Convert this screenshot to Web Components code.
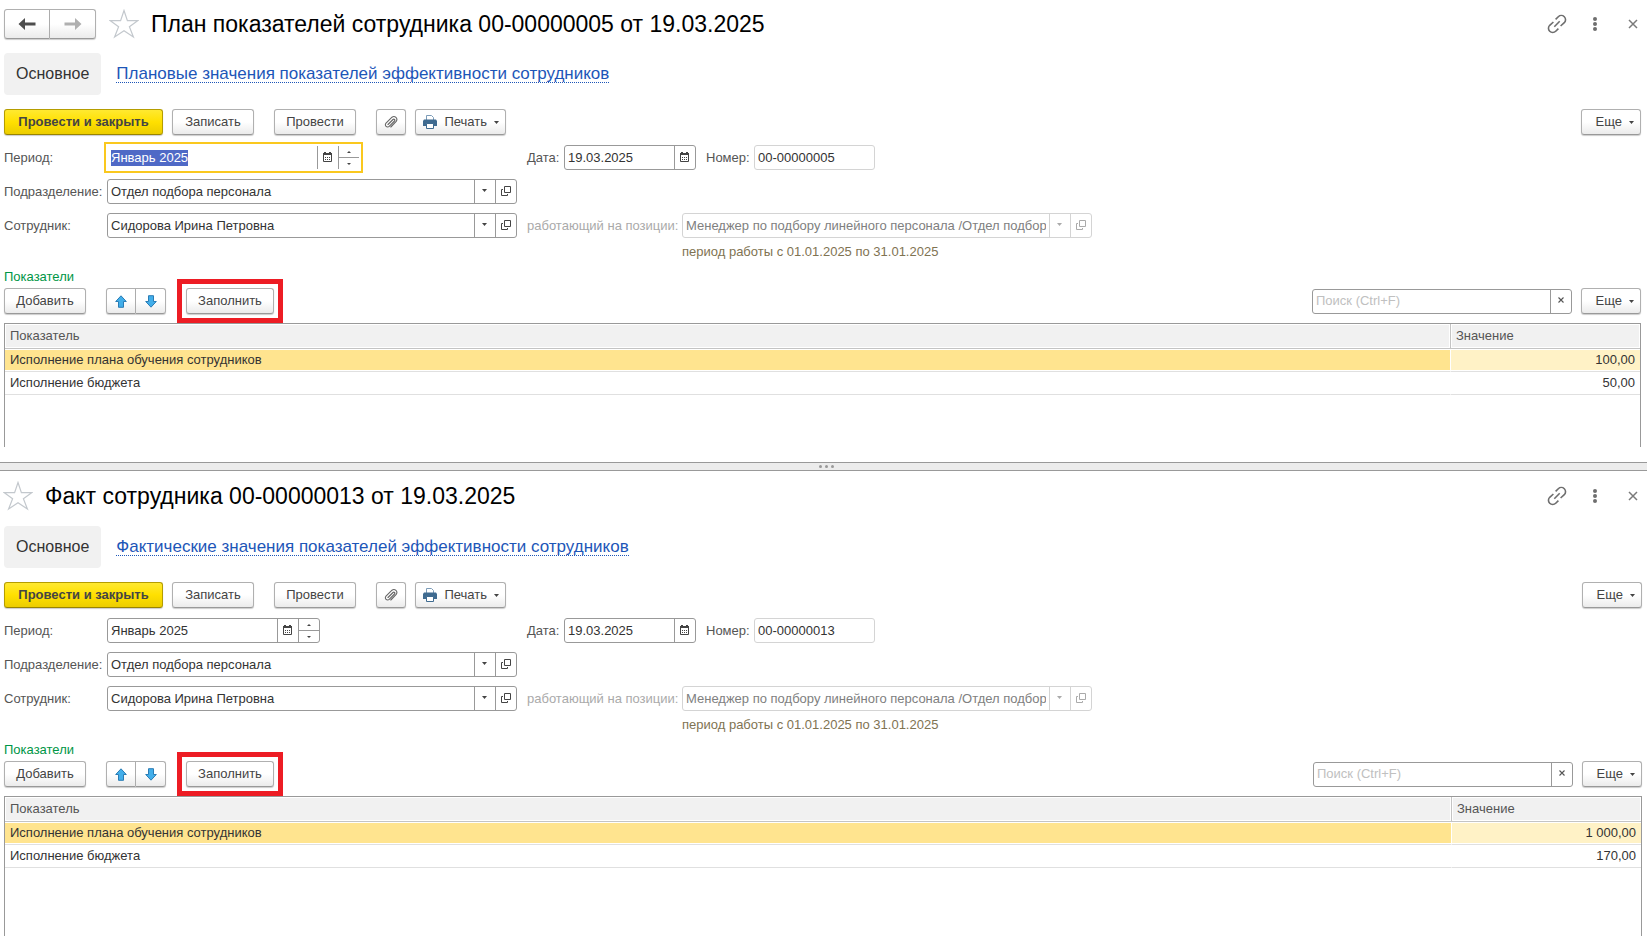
<!DOCTYPE html>
<html lang="ru">
<head>
<meta charset="utf-8">
<title>План и факт показателей сотрудника</title>
<style>
    body{
        margin: 0;
        background-color: #fff;
        color: #333;
        font-family: "Liberation Sans", Arial, sans-serif;
        font-size: 13px;
        line-height: 16px;
    }
</style>
</head>
<body>

<work-space>
    <doc-form
        nav focused
        heading="План показателей сотрудника 00-00000005 от 19.03.2025"
        link="Плановые значения показателей эффективности сотрудников"
        number="00-00000005">
        <indicator-table slot="table" rows='[["Исполнение плана обучения сотрудников","100,00"],["Исполнение бюджета","50,00"]]'></indicator-table>
    </doc-form>
    <doc-form
        slot="second"
        heading="Факт сотрудника 00-00000013 от 19.03.2025"
        link="Фактические значения показателей эффективности сотрудников"
        number="00-00000013">
        <indicator-table slot="table" rows='[["Исполнение плана обучения сотрудников","1 000,00"],["Исполнение бюджета","170,00"]]'></indicator-table>
    </doc-form>
</work-space>

<script>
const icons = {
    back: '<svg width="18" height="14" viewBox="0 0 18 14"><path d="M0.5 7 L7 1 V5.5 H17.5 V8.5 H7 V13 Z" fill="#4d4d4d"/></svg>',
    forward: '<svg width="18" height="14" viewBox="0 0 18 14"><path d="M17.5 7 L11 1 V5.5 H0.5 V8.5 H11 V13 Z" fill="#b0b0b0"/></svg>',
    star: '<svg width="30" height="30" viewBox="0 0 30 30"><path d="M15 1.5 L18.4 11.6 H29 L20.4 17.8 L24.4 28 L15 21.8 L5.6 28 L9.6 17.8 L1 11.6 H11.6 Z" fill="none" stroke="#c3c8cd" stroke-width="1.2"/></svg>',
    link: '<svg width="20" height="20" viewBox="0 0 20 20" fill="none" stroke="#6e6e6e" stroke-width="1.6"><path d="M8.6 5.4 L11.3 2.7 A4.2 4.2 0 0 1 17.3 8.7 L13.6 12 M11.4 14.6 L8.7 17.3 A4.2 4.2 0 0 1 2.7 11.3 L6.4 8 M7.3 12.7 L12.7 7.3"/></svg>',
    dots: '<svg width="6" height="16" viewBox="0 0 6 16" fill="#6e6e6e"><circle cx="3" cy="3" r="2"/><circle cx="3" cy="8" r="2"/><circle cx="3" cy="13" r="2"/></svg>',
    close: '<svg width="10" height="10" viewBox="0 0 10 10"><path d="M1 1 L9 9 M9 1 L1 9" stroke="#7a7a7a" stroke-width="1.5"/></svg>',
    clip: '<svg width="14" height="14" viewBox="0 0 14 14"><path d="M4 9.5 L9 4.5 A1 1 0 0 1 10.5 6 L5.2 11.3 A2.2 2.2 0 0 1 2 8.2 L8 2.2 A3 3 0 0 1 12.2 6.4 L6.8 12" fill="none" stroke="#666" stroke-width="1.1" stroke-linecap="round"/></svg>',
    print: '<svg width="14" height="14" viewBox="0 0 14 14"><path d="M3.5 5 V0.5 H8.5 L10.5 2.5 V5" fill="#fff" stroke="#7c9cb8"/><path d="M1 4.5 H13 L14 6 V11 H0 V6 Z" fill="#3f6b90"/><path d="M3.5 8.5 H10.5 V13.5 H3.5 Z" fill="#fff" stroke="#3f6b90"/></svg>',
    up: '<svg width="12" height="13" viewBox="0 0 12 13"><path d="M6 0.8 L11.3 6.5 H8.5 V12.3 H3.5 V6.5 H0.7 Z" fill="#42aeea" stroke="#2a7cb4"/></svg>',
    down: '<svg width="12" height="13" viewBox="0 0 12 13"><path d="M6 12.2 L11.3 6.5 H8.5 V0.7 H3.5 V6.5 H0.7 Z" fill="#42aeea" stroke="#2a7cb4"/></svg>',
    calendar: '<svg width="9" height="10" viewBox="0 0 9 10"><path d="M0.5 3 V9.5 H8.5 V3" fill="none" stroke="currentColor"/><path d="M0 1 H1 V0 H3 V1 H6 V0 H8 V1 H9 V3 H0 Z" fill="currentColor"/><path d="M2 5.5 H7 M2 7.5 H7" stroke="currentColor" stroke-dasharray="1 1"/></svg>',
    caret: '<svg width="5" height="3" viewBox="0 0 5 3"><path d="M0 0 H5 L2.5 3 Z" fill="currentColor"/></svg>',
    spinUp: '<svg width="4" height="2" viewBox="0 0 4 2"><path d="M0 2 L2 0 L4 2 Z" fill="currentColor"/></svg>',
    spinDown: '<svg width="4" height="2" viewBox="0 0 4 2"><path d="M0 0 L2 2 L4 0 Z" fill="currentColor"/></svg>',
    open: '<svg width="10" height="10" viewBox="0 0 10 10" fill="none" stroke="currentColor"><path d="M3.5 0.5 H9.5 V6.5 H3.5 Z M2 3.5 H0.5 V9.5 H6.5 V8"/></svg>',
    clear: '<svg width="6" height="6" viewBox="0 0 6 6"><path d="M0.5 0.5 L5.5 5.5 M5.5 0.5 L0.5 5.5" stroke="#555" stroke-width="1.1"/></svg>'
};

// which small buttons stand at the end of an entry field
const fieldButtons = {
    calendar: `<button aria-label="Календарь">${icons.calendar}</button>`,
    spin: `<span class="spin"><button aria-label="Больше">${icons.spinUp}</button><button aria-label="Меньше">${icons.spinDown}</button></span>`,
    select: `<button aria-label="Выбрать">${icons.caret}</button>`,
    open: `<button aria-label="Открыть">${icons.open}</button>`,
    clear: `<button aria-label="Очистить">${icons.clear}</button>`
};

class PushButton extends HTMLElement {
    constructor() {
        super();
        const icon = this.getAttribute("icon");
        this.attachShadow({mode: 'open'});
        this.shadowRoot.innerHTML = `
            <style>
                :host{
                    display: block;
                    flex: none;
                }

                button{
                    display: flex;
                    align-items: center;
                    justify-content: center;
                    gap: 7px;
                    box-sizing: border-box;
                    width: 100%;
                    height: var(--push-height, 26px);
                    margin: 0;
                    padding: 0 8px;
                    border: solid 1px #b0b0b0;
                    border-bottom-color: #999;
                    border-radius: 3px;
                    background: linear-gradient(#fff 50%, #ebebeb);
                    box-shadow: 0 1px 1px rgba(0,0,0,0.2);
                    color: #444;
                    font: inherit;
                    white-space: nowrap;
                }

                :host([primary]) button{
                    border-color: #b59d00;
                    border-bottom-color: #998400;
                    background: linear-gradient(#ffe931, #ffe000 50%, #eccd00);
                    font-weight: bold;
                }

                :host([icon-only]) button{
                    padding: 0;
                }

                :host([menu]) button{
                    justify-content: flex-end;
                    padding: 0 6px;
                }

                :host([joined="left"]) button{
                    border-radius: 3px 0 0 3px;
                }

                :host([joined="right"]) button{
                    border-left: none;
                    border-radius: 0 3px 3px 0;
                }
            </style>
            <button ${this.hasAttribute("label") ? `aria-label="${this.getAttribute("label")}"` : ""}>${icon ? icons[icon] : ""}<slot></slot>${this.hasAttribute("menu") ? icons.caret : ""}</button>
        `;
    }
}

class EntryField extends HTMLElement {
    constructor() {
        super();
        const label = this.getAttribute("label");
        const buttons = (this.getAttribute("buttons") || "").split(" ").filter(Boolean);
        this.attachShadow({mode: 'open'});
        this.shadowRoot.innerHTML = `
            <style>
                :host{
                    display: flex;
                    align-items: center;
                    color: #555;
                }

                label{
                    flex: none;
                    width: var(--label-width, auto);
                    white-space: nowrap;
                }

                .box{
                    display: flex;
                    flex: none;
                    box-sizing: border-box;
                    width: var(--box-width);
                    height: 25px;
                    border: solid 1px #999;
                    border-radius: 3px;
                    background-color: #fff;
                    color: #444;
                }

                input{
                    flex: 1;
                    min-width: 0;
                    margin: 0;
                    padding: 0 3px;
                    border: none;
                    outline: none;
                    background: none;
                    color: #333;
                    font: inherit;
                }

                input::placeholder{
                    color: #c0c0c0;
                }

                input::selection{
                    background-color: #4f69c6;
                    color: #fff;
                }

                button{
                    display: flex;
                    align-items: center;
                    justify-content: center;
                    box-sizing: border-box;
                    width: 21px;
                    margin: 0;
                    padding: 0 1px 2px 0;
                    border: none;
                    border-left: solid 1px #999;
                    background: none;
                    color: inherit;
                }

                .spin{
                    display: flex;
                    flex-direction: column;
                    border-left: solid 1px #999;
                }

                .spin button{
                    flex: 1;
                    width: 20px;
                    padding: 0;
                    border-left: none;
                }

                .spin button + button{
                    border-top: solid 1px #999;
                }

                :host([readonly]) .box{
                    border-color: #d4d4d4;
                }

                :host([disabled]){
                    color: #aaa;
                }

                :host([disabled]) .box{
                    border-color: #d4d4d4;
                    color: #aaa;
                }

                :host([disabled]) input{
                    color: #808080;
                }

                :host([disabled]) button{
                    border-color: #d4d4d4;
                }

                /* the active field carries a thick yellow frame outside its box */
                :host([active]) .box{
                    border-color: #fff;
                    border-radius: 0;
                    outline: solid 2px #fac81e;
                    outline-offset: 1px;
                }
            </style>
            ${label ? `<label for="field">${label}</label>` : ""}
            <div class="box">
                <input id="field" type="text">
                ${buttons.map(name => fieldButtons[name]).join("")}
            </div>
        `;
        const input = this.shadowRoot.querySelector("input");
        input.value = this.getAttribute("value") || "";
        input.placeholder = this.getAttribute("placeholder") || "";
        input.readOnly = this.hasAttribute("readonly");
        input.disabled = this.hasAttribute("disabled");
        if (!label) input.setAttribute("aria-label", input.placeholder);
    }

    connectedCallback() {
        if (this.hasAttribute("active")) {
            const input = this.shadowRoot.querySelector("input");
            input.focus();
            input.select();
        }
    }
}

class IndicatorTable extends HTMLElement {
    constructor() {
        super();
        const rows = JSON.parse(this.getAttribute("rows"));
        this.attachShadow({mode: 'open'});
        this.shadowRoot.innerHTML = `
            <style>
                :host{
                    display: block;
                    flex: 1;
                    border: solid 1px #999;
                    border-bottom: none;
                }

                table{
                    width: 100%;
                    border-collapse: separate;
                    border-spacing: 0;
                    table-layout: fixed;
                }

                th, td{
                    box-sizing: border-box;
                    height: 23px;
                    padding: 0 5px;
                    border-bottom: solid 1px #e0e0e0;
                    text-align: left;
                    font-weight: normal;
                }

                th{
                    height: 25px;
                    border-bottom-color: #c4c4c4;
                    background-color: #f1f1f1;
                    box-shadow: inset 0 0 0 1px #fff;
                    color: #555;
                }

                th + th{
                    width: 190px;
                    border-left: solid 1px #c4c4c4;
                }

                td + td{
                    border-left: solid 1px #fff;
                    text-align: right;
                }

                tr.current td{
                    background-color: #ffe48f;
                    box-shadow: inset 0 1px #fff, inset 0 -1px #fff;
                }

                tr.current td + td{
                    background-color: #fff2c6;
                }
            </style>
            <table>
                <thead>
                    <tr><th>Показатель</th><th>Значение</th></tr>
                </thead>
                <tbody>
                    ${rows.map(([name, value], i) => `<tr${i === 0 ? ' class="current"' : ""}><td>${name}</td><td>${value}</td></tr>`).join("")}
                </tbody>
            </table>
        `;
    }
}

class DocForm extends HTMLElement {
    constructor() {
        super();
        const focused = this.hasAttribute("focused");
        this.attachShadow({mode: 'open'});
        this.shadowRoot.innerHTML = `
            <style>
                :host{
                    display: flex;
                    flex-direction: column;
                    box-sizing: border-box;
                    padding: 0 5px 0 4px;
                }

                :host([nav]){
                    padding-right: 6px;
                }

                header{
                    display: flex;
                    align-items: center;
                    height: 50px;
                    margin: 0 -5px 0 -1px;
                }

                :host([nav]) header{
                    height: 48px;
                    margin-right: -6px;
                }

                h1{
                    flex: 1;
                    margin: 0;
                    color: #000;
                    font-size: 23px;
                    font-weight: normal;
                    line-height: 28px;
                    white-space: nowrap;
                }

                .history{
                    display: flex;
                    margin: 0 13px 0 1px;
                    --push-height: 30px;
                }

                .history push-button{
                    width: 46px;
                }

                .tools{
                    display: flex;
                    gap: 10px;
                }

                .plain{
                    display: flex;
                    align-items: center;
                    justify-content: center;
                    width: 28px;
                    height: 30px;
                    margin: 0;
                    padding: 0;
                    border: none;
                    background: none;
                }

                .star{
                    width: 30px;
                    margin-right: 12px;
                }

                nav{
                    display: flex;
                    align-items: center;
                    gap: 15px;
                    margin-top: 5px;
                    font-size: 16px;
                    line-height: 18px;
                }

                .tab{
                    padding: 12px;
                    border-radius: 4px;
                    background-color: #f1f1f1;
                }

                a{
                    border-bottom: dotted 1px #1d56b8;
                    color: #1d56b8;
                    font-size: 17px;
                    line-height: 16px;
                    text-decoration: none;
                }

                .bar{
                    display: flex;
                    align-items: center;
                    gap: 9px;
                }

                .commands{
                    margin: 14px 0 10px;
                }

                .wide{
                    margin-left: 11px;
                }

                .right{
                    margin-left: auto;
                }

                .main{
                    width: 159px;
                }

                .command{
                    width: 82px;
                }

                .clip{
                    width: 30px;
                }

                .print{
                    width: 91px;
                }

                .more{
                    width: 60px;
                }

                .fields{
                    display: grid;
                    grid-template-columns: 513px 1fr;
                    column-gap: 10px;
                    row-gap: 9px;
                    --label-width: 103px;
                    --box-width: 410px;
                }

                .period{
                    --box-width: ${focused ? "253px" : "213px"};
                }

                .pair{
                    display: flex;
                    gap: 10px;
                }

                .date{
                    --label-width: 37px;
                    --box-width: 132px;
                }

                .number{
                    --label-width: 48px;
                    --box-width: 121px;
                }

                .position{
                    grid-column: 2;
                    --label-width: 155px;
                }

                .note{
                    margin: 6px 0 0 678px;
                    color: #7f7352;
                }

                h2{
                    margin: 9px 0 3px;
                    color: #009646;
                    font-size: 13px;
                    font-weight: normal;
                    line-height: 16px;
                }

                .list{
                    margin-bottom: 9px;
                }

                .arrows{
                    display: flex;
                    margin: 0 11px;
                }

                .arrows push-button{
                    width: 30px;
                }

                .search{
                    --label-width: auto;
                    --box-width: 260px;
                }

                /* red frame drawn round the command, over whatever is near */
                .marked{
                    width: 88px;
                    outline: solid 5px #ed1c24;
                    outline-offset: 4px;
                }

                ::slotted(indicator-table){
                    flex: 1;
                }
            </style>
            <header>
                ${this.hasAttribute("nav") ? `
                <div class="history">
                    <push-button icon-only joined="left" icon="back" label="Назад"></push-button>
                    <push-button icon-only joined="right" icon="forward" label="Вперед"></push-button>
                </div>` : ""}
                <button class="plain star" aria-label="В избранное">${icons.star}</button>
                <h1>${this.getAttribute("heading")}</h1>
                <div class="tools">
                    <button class="plain" aria-label="Ссылка">${icons.link}</button>
                    <button class="plain" aria-label="Меню">${icons.dots}</button>
                    <button class="plain" aria-label="Закрыть">${icons.close}</button>
                </div>
            </header>
            <nav>
                <span class="tab">Основное</span>
                <a href="#">${this.getAttribute("link")}</a>
            </nav>
            <div class="bar commands">
                <push-button class="main" primary>Провести и закрыть</push-button>
                <push-button class="command">Записать</push-button>
                <push-button class="command wide">Провести</push-button>
                <push-button class="clip wide" icon-only icon="clip" label="Файлы"></push-button>
                <push-button class="print" icon="print" menu>Печать</push-button>
                <push-button class="more right" menu>Еще</push-button>
            </div>
            <div class="fields">
                <entry-field class="period" label="Период:" value="Январь 2025" buttons="calendar spin" ${focused ? "active" : ""}></entry-field>
                <div class="pair">
                    <entry-field class="date" label="Дата:" value="19.03.2025" buttons="calendar"></entry-field>
                    <entry-field class="number" label="Номер:" value="${this.getAttribute("number")}" readonly></entry-field>
                </div>
                <entry-field label="Подразделение:" value="Отдел подбора персонала" buttons="select open"></entry-field>
                <span></span>
                <entry-field label="Сотрудник:" value="Сидорова Ирина Петровна" buttons="select open"></entry-field>
                <entry-field class="position" label="работающий на позиции:" value="Менеджер по подбору линейного персонала /Отдел подбора персонала/" buttons="select open" disabled></entry-field>
            </div>
            <div class="note">период работы с 01.01.2025 по 31.01.2025</div>
            <h2>Показатели</h2>
            <div class="bar list">
                <push-button class="command">Добавить</push-button>
                <div class="arrows">
                    <push-button icon-only joined="left" icon="up" label="Вверх"></push-button>
                    <push-button icon-only joined="right" icon="down" label="Вниз"></push-button>
                </div>
                <push-button class="marked">Заполнить</push-button>
                <entry-field class="search right" placeholder="Поиск (Ctrl+F)" buttons="clear"></entry-field>
                <push-button class="more" menu>Еще</push-button>
            </div>
            <slot name="table"></slot>
        `;
    }
}

class WorkSpace extends HTMLElement {
    constructor() {
        super();
        this.attachShadow({mode: 'open'});
        this.shadowRoot.innerHTML = `
            <style>
                :host{
                    display: grid;
                    grid-template-rows: 447fr auto 465fr;
                    box-sizing: border-box;
                    height: 100vh;
                    padding-bottom: 9px;
                }

                .splitter{
                    display: flex;
                    align-items: center;
                    justify-content: center;
                    gap: 3px;
                    height: 7px;
                    margin-top: 15px;
                    padding-left: 6px;
                    border: solid #999;
                    border-width: 1px 0;
                    background-color: #ececec;
                }

                .splitter i{
                    width: 3px;
                    height: 3px;
                    border-radius: 2px;
                    background-color: #999;
                }
            </style>
            <slot></slot>
            <div class="splitter"><i></i><i></i><i></i></div>
            <slot name="second"></slot>
        `;
    }
}

window.customElements.define('push-button', PushButton);
window.customElements.define('entry-field', EntryField);
window.customElements.define('indicator-table', IndicatorTable);
window.customElements.define('doc-form', DocForm);
window.customElements.define('work-space', WorkSpace);
</script>
</body>
</html>
